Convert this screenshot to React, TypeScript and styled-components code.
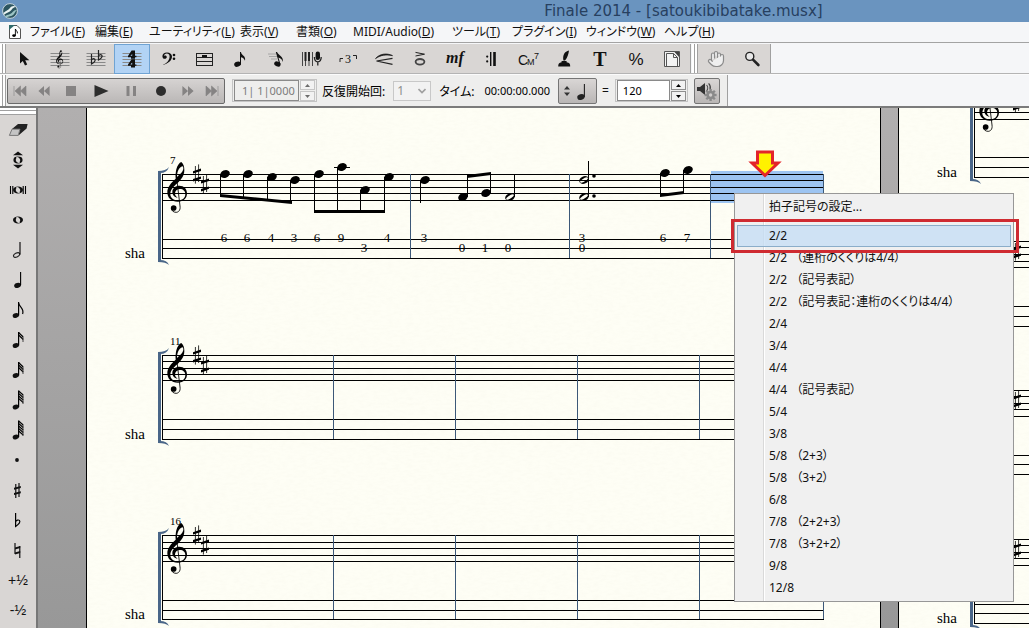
import React from "react";
import styled, { createGlobalStyle, css } from "styled-components";
import { Hand } from "lucide-react";

const UI_FONT = `"Noto Sans", "Noto Sans CJK JP", sans-serif`;
const SCORE_FONT = `"Liberation Serif", serif`;

const GlobalStyle = createGlobalStyle`
  *, *::before, *::after { box-sizing: border-box; }
  body { margin: 0; background: #f5f6f8; font-family: ${UI_FONT}; color: #111; }
  button, input, select { font: inherit; color: inherit; margin: 0; }
  button { padding: 0; border: 0; background: none; white-space: nowrap; }
  svg { display: block; flex: none; }
`;

/* ---------- window frame ---------- */

const Window = styled.div`
  display: flex;
  flex-direction: column;
  height: 100vh;
  overflow: hidden;
`;

const TitleBar = styled.header`
  display: flex;
  align-items: center;
  flex: none;
  height: 22px;
  padding-left: 2px;
  background: #6a94bf;
`;

const Title = styled.h1`
  flex: 1;
  margin: 0 0 0 320px;
  font-size: 15px;
  line-height: 20px;
  font-weight: 400;
  font-family: "DejaVu Sans", sans-serif;
  text-align: center;
  white-space: nowrap;
  color: #27405f;
`;

const MenuBar = styled.nav`
  display: grid;
  grid-template-columns: 22px 65px 54px 91px 56px 57px 99px 60px 74px 78px 60px;
  align-items: center;
  flex: none;
  height: 20px;
  padding-left: 8px;
  background: #f5f6f8;
  font-size: 12px;
  line-height: 18px;
`;

const MenuTitle = styled.button`
  text-align: left;
  font-feature-settings: "palt";
`;

/* ---------- tool rows ---------- */

const ToolRow = styled.div`
  display: flex;
  flex: none;
  height: 33px;
  padding: 1px 0 2px;
  border-top: 1px solid #a3a3a3;
  background: linear-gradient(#f5f6f8 0 30px, #b4b4b4 30px 31px, #fbfbfb 31px);
`;

const Grip = styled.span`
  flex: none;
  align-self: stretch;
  width: 6px;
  border-left: 2px solid #fff;
  border-right: 1px solid #a0a0a0;
  background: linear-gradient(90deg, #a0a0a0 0 1px, #fff 1px);
`;

const ToolStrip = styled.div`
  display: flex;
  flex: none;
  margin-right: 1px;
  border-right: 1px solid #a0a0a0;
  background: #d9d6d4;
`;

const ToolButton = styled.button<{ $active?: boolean }>`
  display: flex;
  align-items: center;
  justify-content: center;
  width: 36px;
  height: 30px;
  ${(p) =>
    p.$active &&
    css`
      background: #b2d3f5;
      border: 1px solid #6fa3d3;
    `}
`;

const PlaybackRow = styled.div`
  display: flex;
  flex: none;
  height: 33px;
  border-bottom: 2px solid #7b7b7b;
  background: #f5f6f8;
`;

const PlaybackBar = styled.div`
  display: flex;
  align-items: center;
  padding-right: 7px;
  border-right: 1px solid #a0a0a0;
  background: #eeeeed;
  font-size: 12px;
  white-space: nowrap;

  & > * { flex: none; }
`;

const Transport = styled.div`
  display: flex;
  height: 26px;
  margin: 0 7px 0 1px;
  border: 1px solid #6a6a6a;
  border-radius: 2px;
  background: linear-gradient(#d6d3d2, #bab7b6);
`;

const TransportButton = styled.button<{ $wide?: boolean }>`
  display: flex;
  align-items: center;
  justify-content: center;
  width: ${(p) => (p.$wide ? 30 : 24)}px;
`;

const NumberField = styled.span`
  display: flex;
  align-items: center;
  gap: 1px;
  height: 23px;
  padding: 1px;
  border: 1px solid #c4c4c4;
`;

const NumberInput = styled.input<{ $muted?: boolean; $width: number }>`
  width: ${(p) => p.$width}px;
  height: 21px;
  padding: 0 0 0 ${(p) => (p.$muted ? 7 : 5)}px;
  border: 1px solid #8a8a8a;
  border-radius: 0;
  background: ${(p) => (p.$muted ? "#eeeeed" : "#fff")};
  color: ${(p) => (p.$muted ? "#7c7c7c" : "#000")};
  font-size: 11px;
`;

const Stepper = styled.span`
  display: flex;
  flex-direction: column;
  gap: 1px;
`;

const StepButton = styled.button<{ $muted?: boolean }>`
  display: flex;
  align-items: center;
  justify-content: center;
  width: 15px;
  height: 10px;
  border: 1px solid ${(p) => (p.$muted ? "#c6c6c6" : "#8f8f8f")};
  background: #f2f2f2;
  color: ${(p) => (p.$muted ? "#6c6c6c" : "#000")};
`;

const FieldLabel = styled.label`
  display: flex;
  align-items: center;
  gap: 8px;
  margin-left: 5px;
  color: #000;
`;

const SelectBox = styled.span`
  display: grid;
  align-items: center;
  width: 38px;
  height: 20px;
  border: 1px solid #c8c8c8;
  background: #f2f2f2;

  & > * { grid-area: 1 / 1; }
  & > svg { justify-self: end; margin-right: 4px; pointer-events: none; }
`;

const PassSelect = styled.select`
  appearance: none;
  width: 100%;
  height: 18px;
  padding: 0 0 0 3px;
  border: 0;
  border-radius: 0;
  background: none;
  color: #8d8d8d;
  opacity: 1;
`;

const TimeLabel = styled.span`
  margin-left: 8px;
  font-feature-settings: "palt";
  color: #000;
`;

const TimeValue = styled.output`
  margin: 0 8px 0 10px;
  font-size: 11px;
  color: #000;
`;

const RaisedButton = styled.button<{ $width: number }>`
  display: flex;
  align-items: center;
  justify-content: center;
  gap: 2px;
  width: ${(p) => p.$width}px;
  height: 26px;
  border: 1px solid #757575;
  border-radius: 2px;
  background: linear-gradient(#d9d6d5, #b9b6b5);
`;

const TempoField = styled.label`
  display: flex;
  align-items: center;
  gap: 6px;
  margin: 0 6px 0 5px;
`;

/* ---------- palette and document area ---------- */

const Body = styled.main`
  display: flex;
  flex: 1;
  min-height: 0;
`;

const Palette = styled.aside`
  display: flex;
  flex-direction: column;
  flex: none;
  width: 36px;
  background: #d9d6d4;
`;

const PaletteGrip = styled.span`
  flex: none;
  height: 7px;
  border-top: 2px solid #fff;
  border-bottom: 1px solid #a0a0a0;
  background: linear-gradient(#a0a0a0 0 1px, #fff 1px);
`;

const PaletteButton = styled.button`
  display: flex;
  align-items: center;
  justify-content: center;
  flex: none;
  height: 30px;
  font-family: "Liberation Sans", sans-serif;
  font-size: 14px;
  line-height: 20px;
`;

const Workspace = styled.section`
  position: relative;
  display: flex;
  flex: 1;
  gap: 17px;
  min-width: 0;
  padding-left: 48px;
  border-left: 2px solid #777;
  overflow: hidden;
  background: linear-gradient(#b1afaf, #989898);
`;

const Sheet = styled.article<{ $last?: boolean }>`
  flex: ${(p) => (p.$last ? "1 0 0" : "none")};
  min-width: 0;
  overflow: hidden;
  border: solid #000;
  border-width: 0 ${(p) => (p.$last ? 0 : 1)}px 0 1px;
  background: #fefef5;
`;

const MeterMenu = styled.div`
  position: absolute;
  left: 696px;
  top: 85px;
  width: 280px;
  display: flex;
  flex-direction: column;
  padding: 2px;
  border: 1px solid #979797;
  background: linear-gradient(90deg, transparent 28px, #d9d9d9 28px 29px, #fff 29px 30px, transparent 30px) #f0f0f0;
`;

const MeterItem = styled.button<{ $active?: boolean }>`
  display: flex;
  align-items: center;
  gap: 9px;
  height: 22px;
  padding-left: 31px;
  border: 1px solid transparent;
  font-size: 12px;
  line-height: 20px;
  font-feature-settings: "palt";
  ${(p) =>
    p.$active &&
    css`
      border-color: #8badc9;
      background: rgba(196, 222, 245, 0.75);
    `}
`;

const Divider = styled.hr`
  width: 243px;
  height: 1px;
  margin: 3px 2px 3px auto;
  border: 0;
  background: #e0e0e0;
`;

const Highlight = styled.div`
  position: absolute;
  left: 693px;
  top: 111px;
  width: 288px;
  height: 34px;
  border: 3px solid #cf2b31;
  pointer-events: none;
`;

const Pointer = styled.svg`
  position: absolute;
  left: 709px;
  top: 41px;
`;

/* ---------- notation primitives ---------- */

const TrebleClef = ({ x, y, s }: { x: number; y: number; s: number }) => (
  <g transform={`translate(${x} ${y}) scale(${s})`}>
    <path
      fillRule="evenodd"
      d="M43 0C49 5 52 13 52 24C52 42 42 53 31 64C18 75 10 84 10 96C10 108 20 115 34 115C48 115 55 106 55 96C55 87 48 81 39 81C30 81 24 87 24 94C24 100 27 104 32 107C22 106 16 99 16 90C16 79 25 71 37 71C51 71 60 80 60 94C60 109 50 119 33 119C13 119 1 108 1 91C1 74 13 62 26 50C25 41 26 31 28 22C31 10 37 2 43 0ZM46 13C37 15 30 28 30 45C40 36 49 29 49 19C49 15 48 13 46 13Z"
    />
    <path d="M28 40L39 132C41 145 34 151 27 151C20 151 13 146 13 139" fill="none" stroke="#000" strokeWidth="2.6" />
    <circle cx="20" cy="138" r="8.5" />
  </g>
);

const Sharp = ({ x, y }: { x: number; y: number }) => (
  <g transform={`translate(${x} ${y})`}>
    <path d="M-1.6 -8V9.6M1.6 -9.6V8" stroke="#000" strokeWidth="0.8" />
    <path d="M-4 -2.8L4 -5.4V-3L-4 -0.6ZM-4 5L4 2.4V4.8L-4 7.4Z" />
  </g>
);

const Head = ({ x, y, open }: { x: number; y: number; open?: boolean }) => (
  <g transform={`translate(${x} ${y}) rotate(-24)`}>
    {open ? (
      <path fillRule="evenodd" d="M-5 0A5 3.6 0 1 1 5 0A5 3.6 0 1 1 -5 0ZM-4.2 0.9A4.3 1.5 -8 1 0 4.2 -0.9A4.3 1.5 -8 1 0 -4.2 0.9Z" />
    ) : (
      <ellipse rx="5" ry="3.7" />
    )}
  </g>
);

const Stem = ({ x, from, to }: { x: number; from: number; to: number }) => (
  <rect x={x} y={Math.min(from, to)} width="1" height={Math.abs(to - from)} />
);

const Beam = ({ x1, y1, x2, y2 }: { x1: number; y1: number; x2: number; y2: number }) => (
  <path d={`M${x1} ${y1}L${x2} ${y2}v3L${x1} ${y1 + 3}Z`} />
);

type SystemProps = {
  left: number;
  right: number;
  staff: number[];
  tab: number[];
  bars: number[];
  label?: string;
  number?: string;
};

const System = ({ left, right, staff, tab, bars, label, number }: SystemProps) => {
  const top = staff[0];
  const bottom = tab[2];
  return (
    <g>
      {[...staff, ...tab].map((y) => (
        <rect key={y} x={left} y={y} width={right - left} height="1" />
      ))}
      {bars.map((x) => (
        <rect key={x} x={x} y={top} width="1" height={bottom - top} fill="#3c5878" />
      ))}
      <rect x={left} y={top} width="1" height={bottom - top + 1} />
      <rect x={left - 4} y={top - 3} width="3" height={bottom - top + 7} fill="#4a6688" />
      <path
        d={`M${left - 4} ${top - 3}q8 0 11 -4q-2 6 -9 6zM${left - 4} ${bottom + 4}q8 0 11 3q-2 -5 -9 -5z`}
        fill="#4a6688"
      />
      <TrebleClef x={left + 5} y={top - 12} s={1 / 3} />
      <Sharp x={left + 35} y={top} />
      <Sharp x={left + 43} y={top + 10} />
      {number && (
        <text x={left + 8} y={top - 10} fontSize="11">
          {number}
        </text>
      )}
      {label && (
        <text x={left - 37} y={bottom} fontSize="15">
          {label}
        </text>
      )}
    </g>
  );
};

const PaperGrain = ({ id }: { id: string }) => (
  <>
    <filter id={id} x="0" y="0" width="100%" height="100%">
      <feTurbulence type="fractalNoise" baseFrequency="0.15 0.4" numOctaves="2" seed="4" />
      <feColorMatrix values="0 0 0 0 0.6  0 0 0 0 0.57  0 0 0 0 0.45  0.4 0 0 0 -0.15" />
    </filter>
    <rect width="100%" height="100%" filter={`url(#${id})`} opacity="0.25" />
  </>
);

/* Coordinates inside a sheet are measured from the top left of its paper. */

const beamedNotes: [number, number, number, number][] = [
  // head x, head y, stem x, stem end
  [138, 66, 133, 88],
  [161, 66, 156, 90],
  [185, 69, 180, 93],
  [208, 72, 203, 95],
  [232, 66, 227, 104],
  [255, 59, 250, 104],
  [278, 82, 273, 104],
  [302, 69, 297, 104],
  [338, 72, 333, 95],
  [376, 89, 380, 68],
  [399, 85, 403, 65],
  [578, 65, 573, 88],
  [601, 62, 596, 85],
];

const tabNumbers: [number, number, string][] = [
  [137, 0, "6"], [160, 0, "6"], [184, 0, "4"], [207, 0, "3"],
  [230, 0, "6"], [254, 0, "9"], [277, 1, "3"], [300, 0, "4"],
  [337, 0, "3"], [375, 1, "0"], [398, 1, "1"], [421, 1, "0"],
  [495, 0, "3"], [495, 1, "0"], [576, 0, "6"], [600, 0, "7"],
];

const FirstSheet = () => (
  <svg width="793" height="520" fontFamily={SCORE_FONT} role="img" aria-label="satoukibibatake">
    <PaperGrain id="grain-a" />
    <rect x="624" y="63" width="112" height="32" fill="#9dc4f1" />
    <System left={75} right={737} staff={[66, 72, 79, 85, 92]} tab={[131, 140, 150]} bars={[323, 482, 623, 736]} label="sha" number="7" />
    <System left={75} right={737} staff={[247, 253, 260, 266, 272]} tab={[311, 321, 331]} bars={[246, 368, 490, 612, 736]} label="sha" number="11" />
    <System left={75} right={737} staff={[427, 434, 440, 447, 453]} tab={[492, 502, 511]} bars={[246, 368, 490, 612, 736]} label="sha" number="16" />
    {beamedNotes.map(([x, y, sx, end]) => (
      <g key={x}>
        <Head x={x} y={y} />
        <Stem x={sx} from={y} to={end} />
      </g>
    ))}
    <rect x="247" y="59" width="16" height="1" />
    <Beam x1={133} y1={86} x2={205} y2={93} />
    <Beam x1={227} y1={102} x2={298} y2={102} />
    <Beam x1={380} y1={67} x2={404} y2={64} />
    <Beam x1={573} y1={86} x2={597} y2={83} />
    <Head x={423} y={89} open />
    <Stem x={427} from={89} to={66} />
    <Head x={497} y={72} open />
    <Head x={497} y={89} open />
    <Stem x={501} from={53} to={89} />
    <circle cx="507" cy="68" r="1.8" />
    <circle cx="507" cy="88" r="1.8" />
    {tabNumbers.map(([x, row, n]) => (
      <text key={`${x}-${row}`} x={x} y={row ? 144 : 134} fontSize="13" textAnchor="middle">
        {n}
      </text>
    ))}
  </svg>
);

const SecondSheet = () => (
  <svg width="100%" height="520" fontFamily={SCORE_FONT} role="img" aria-label="satoukibibatake 2">
    <PaperGrain id="grain-b" />
    <System left={75} right={737} staff={[-15, -9, -2, 4, 11]} tab={[49, 59, 69]} bars={[]} label="sha" />
    <System left={75} right={737} staff={[133, 139, 146, 153, 159]} tab={[198, 208, 218]} bars={[]} />
    <System left={75} right={737} staff={[282, 288, 295, 301, 308]} tab={[347, 356, 366]} bars={[]} />
    <System left={75} right={737} staff={[431, 437, 444, 450, 457]} tab={[496, 505, 515]} bars={[]} label="sha" />
  </svg>
);

/* ---------- icons ---------- */

const Icon = ({ children, size = 24 }: { children: React.ReactNode; size?: number }) => (
  <svg width={size} height={size} viewBox={`0 0 ${size} ${size}`} fill="#111" aria-hidden="true">
    {children}
  </svg>
);

const StaffLines = () => <path d="M2.5 6.5H21.5M2.5 9.5H21.5M2.5 12.5H21.5M2.5 15.5H21.5M2.5 18.5H21.5" stroke="#888" strokeWidth="1" />;

const WholeNote = ({ y = 12, r = 5 }: { y?: number; r?: number }) => (
  <g transform={`translate(12 ${y})`}>
    <path
      fillRule="evenodd"
      d={`M${-r} 0A${r} 3.4 0 1 1 ${r} 0A${r} 3.4 0 1 1 ${-r} 0ZM-1.8 -1.2A2.6 1.6 50 1 0 1.8 1.2A2.6 1.6 50 1 0 -1.8 -1.2Z`}
    />
  </g>
);

const FlaggedNote = ({ flags }: { flags: number }) => {
  const headY = flags > 3 ? 19 : 17.5;
  return (
    <Icon>
      <ellipse cx="9.8" cy={headY} rx="3.2" ry="2.3" transform={`rotate(-18 9.8 ${headY})`} />
      <path d={`M12.6 ${flags > 3 ? 2.5 : 4}V${headY}`} stroke="#000" strokeWidth="1.2" />
      {flags === 1 ? (
        <path d="M12.6 5C13 9 18.6 10 16.6 16" fill="none" stroke="#000" strokeWidth="1.2" />
      ) : (
        <>
          {Array.from({ length: flags }, (_, i) => (
            <path
              key={i}
              d={`M12.6 ${(flags > 3 ? 3 : 4.5) + i * 2.5}L17.2 ${(flags > 3 ? 7 : 9) + i * 2.5}`}
              stroke="#000"
              strokeWidth="1.1"
            />
          ))}
          <path d={`M17 ${flags > 3 ? 7 : 9}V${(flags > 3 ? 10 : 12) + (flags - 1) * 2}`} stroke="#333" strokeWidth="0.9" />
        </>
      )}
    </Icon>
  );
};

const tools: { name: string; icon: React.ReactNode; active?: boolean }[] = [
  { name: "選択", icon: <Icon><path d="M8 5V16.4L10.8 14L13 18.6L15.2 17.6L13.2 13.2H17.4Z" /></Icon> },
  { name: "五線", icon: <Icon><StaffLines /><TrebleClef x={8} y={3} s={0.12} /></Icon> },
  {
    name: "調号",
    icon: (
      <Icon>
        <StaffLines />
        <path d="M7.5 7V17C10 15.5 12 13.5 10.8 12.2C9.8 11.4 8.3 12 7.5 13M14.5 3V13C17 11.5 19 9.5 17.8 8.2C16.8 7.4 15.3 8 14.5 9" fill="none" stroke="#222" strokeWidth="1.2" />
      </Icon>
    ),
  },
  {
    name: "拍子記号",
    active: true,
    icon: (
      <Icon>
        <StaffLines />
        <path d="M11.6 3.6H15V8.8H16.4V10.2H15V11.8H11V10.2H8V9ZM12.2 7L10.4 8.8H12.2ZM11.6 12.2H15V17.4H16.4V18.8H15V20.4H11V18.8H8V17.6ZM12.2 15.6L10.4 17.4H12.2Z" fillRule="evenodd" />
      </Icon>
    ),
  },
  {
    name: "音部記号",
    icon: (
      <Icon>
        <path d="M6.5 18C11 16 13.6 13 13.6 9.4C13.6 7.2 12.4 6.4 10.8 6.4C9.2 6.4 8 7.4 8 9C9 8 10.8 8.6 10.8 10C10.8 11.2 9.8 11.8 8.8 11.8C7.4 11.8 6.4 10.8 6.4 9.2C6.4 7 8.2 5.4 11 5.4C14 5.4 16 7 16 9.6C16 13.6 12 17 6.5 18Z" />
        <circle cx="18" cy="8" r="1.3" />
        <circle cx="18" cy="11.8" r="1.3" />
      </Icon>
    ),
  },
  {
    name: "小節",
    icon: (
      <Icon>
        <path d="M4.5 6.5H20.5M4.5 10.5H20.5M4.5 14.5H20.5M4.5 18.5H20.5M4.5 6V19M20.5 6V19" stroke="#222" fill="none" />
        <rect x="10" y="8" width="5" height="2.4" />
      </Icon>
    ),
  },
  {
    name: "ステップ入力",
    icon: (
      <Icon>
        <ellipse cx="9.6" cy="17.2" rx="3.5" ry="2.5" transform="rotate(-18 9.6 17.2)" />
        <path d="M12 5H13C13.2 8.4 18.2 8.6 17 13.8C16.2 11 14 10.4 13 10.2V17.4H12Z" />
      </Icon>
    ),
  },
  {
    name: "高速ステップ入力",
    icon: (
      <Icon>
        <path d="M4 7H12M5 9.5H13M7 12H13" stroke="#999" strokeWidth="0.8" />
        <ellipse cx="13.4" cy="17" rx="3.3" ry="2.4" transform="rotate(20 13.4 17)" />
        <path d="M11.8 5H13C14 8 19.6 9 19 15C18 11.6 15.6 10.8 14.4 10.4L16.4 17L15.4 17.4Z" />
      </Icon>
    ),
  },
  {
    name: "HyperScribe",
    icon: (
      <Icon>
        <path d="M2.5 5V19M5.5 5V19M9 5V19M12.5 5V19" stroke="#444" />
        <path d="M4.5 5H6.5V14H4.5ZM8 5H10V14H8Z" fill="#222" />
        <rect x="15.6" y="4.6" width="4.4" height="8.4" rx="2.2" />
        <path d="M14.4 10C14.4 16.4 21.2 16.4 21.2 10M17.8 14.6V18.4" fill="none" stroke="#222" strokeWidth="1.3" />
      </Icon>
    ),
  },
  {
    name: "連符",
    icon: (
      <Icon>
        <path d="M4 15V11.5H7M17 8.5H20.5V12" stroke="#222" fill="none" />
        <text x="12" y="16" fontSize="12" fontFamily={SCORE_FONT} textAnchor="middle">3</text>
      </Icon>
    ),
  },
  {
    name: "変形図形",
    icon: (
      <Icon>
        <path d="M3.5 11.6C8 6.4 15 6 20.5 8.6C14 7.2 8.6 8 3.5 11.6Z" stroke="#222" strokeWidth="0.8" />
        <path d="M20.5 11.4L4.5 14L20.5 17.4" fill="none" stroke="#222" strokeWidth="1.1" />
      </Icon>
    ),
  },
  {
    name: "アーティキュレーション",
    icon: (
      <Icon>
        <path d="M7.5 5.4L16.5 7.2L7.5 9" fill="none" stroke="#222" strokeWidth="1" />
        <ellipse cx="12" cy="14.8" rx="4.4" ry="2.8" fill="none" stroke="#444" strokeWidth="1.8" />
      </Icon>
    ),
  },
  {
    name: "発想記号",
    icon: <Icon><text x="11" y="16" fontSize="16" fontWeight="700" fontStyle="italic" fontFamily={SCORE_FONT} textAnchor="middle">mf</text></Icon>,
  },
  {
    name: "反復記号",
    icon: <Icon><circle cx="7.2" cy="9.6" r="1.1" /><circle cx="7.2" cy="14.4" r="1.1" /><path d="M10 5H11.4V19H10ZM13.2 5H15.8V19H13.2Z" /></Icon>,
  },
  {
    name: "コードネーム",
    icon: (
      <Icon>
        <text x="2" y="18" fontSize="14" fontFamily={`"Liberation Sans", sans-serif`}>C</text>
        <text x="11" y="18" fontSize="9" fontFamily={`"Liberation Sans", sans-serif`}>M</text>
        <text x="18" y="12" fontSize="9" fontFamily={`"Liberation Sans", sans-serif`}>7</text>
      </Icon>
    ),
  },
  {
    name: "歌詞",
    icon: <Icon><path d="M17 3.5C12.6 4.4 10.4 8 11.4 13.4L13 13.4C15.6 10.6 16.4 7.4 17 3.5ZM9.6 14H14.6V15.2C17.6 15.6 18.2 17 18.2 19.4H6.2C6.2 17 7 15.6 9.6 15.2Z" /></Icon>,
  },
  {
    name: "文字",
    icon: <Icon><text x="12" y="19" fontSize="20" fontWeight="700" fontFamily={SCORE_FONT} textAnchor="middle">T</text></Icon>,
  },
  {
    name: "サイズ",
    icon: <Icon><text x="12" y="18" fontSize="17" fontFamily={`"Liberation Sans", sans-serif`} textAnchor="middle">%</text></Icon>,
  },
  {
    name: "ページレイアウト",
    icon: (
      <Icon>
        <path d="M4.5 4.5H19.5V19.5H4.5Z" fill="#f3f3f3" stroke="#555" />
        <path d="M6.5 6.5H13.5L17.5 10.5V19M13.5 6.5V10.5H17.5M6.5 6.5V19" fill="none" stroke="#555" />
        <path d="M14.5 5H19V10Z" fill="#444" />
      </Icon>
    ),
  },
];

const paletteItems: { name: string; icon: React.ReactNode }[] = [
  {
    name: "消しゴム",
    icon: (
      <Icon>
        <path d="M6 11L12 6H21.6L14 11ZM14 11L21.6 6L20.6 10.4L12.4 17.4Z" fill="#222" />
        <path d="M6 11.2H14L12.2 17.4H3.4Z" fill="#c4c4c4" stroke="#777" />
      </Icon>
    ),
  },
  { name: "リピート", icon: <Icon><path d="M7 7.2L12 3.4L17 7.2ZM7 16.8L12 20.6L17 16.8Z" /><WholeNote r={4.6} /></Icon> },
  { name: "倍全音符", icon: <Icon><path d="M4.5 8V16M6.8 8V16M17.2 8V16M19.5 8V16" stroke="#000" strokeWidth="1.1" /><WholeNote /></Icon> },
  { name: "全音符", icon: <Icon><WholeNote /></Icon> },
  { name: "2分音符", icon: <Icon><ellipse cx="10.6" cy="17" rx="3.3" ry="1.9" transform="rotate(-28 10.6 17)" fill="none" stroke="#222" strokeWidth="1.1" /><path d="M14 4V16.4" stroke="#000" strokeWidth="1.1" /></Icon> },
  { name: "4分音符", icon: <Icon><ellipse cx="11.6" cy="17.4" rx="3.5" ry="2.5" transform="rotate(-18 11.6 17.4)" /><path d="M14.6 4V17" stroke="#000" strokeWidth="1.1" /></Icon> },
  { name: "8分音符", icon: <FlaggedNote flags={1} /> },
  { name: "16分音符", icon: <FlaggedNote flags={2} /> },
  { name: "32分音符", icon: <FlaggedNote flags={3} /> },
  { name: "64分音符", icon: <FlaggedNote flags={4} /> },
  { name: "128分音符", icon: <FlaggedNote flags={5} /> },
  { name: "付点", icon: <Icon><circle cx="11" cy="12" r="1.9" /></Icon> },
  { name: "シャープ", icon: <Icon><path d="M9.8 6V20M13 5V19" stroke="#000" strokeWidth="1.1" /><path d="M8 9.8L14.8 8V10L8 11.8ZM8 15L14.8 13.2V15.2L8 17Z" /></Icon> },
  { name: "フラット", icon: <Icon><path d="M9.6 5V18.4C13 16 14.8 14 13.4 12.4C12.2 11.4 10.4 12.4 9.6 13.6" fill="none" stroke="#000" strokeWidth="1.2" /></Icon> },
  { name: "ナチュラル", icon: <Icon><path d="M9 5V16M13.8 8V20" stroke="#000" strokeWidth="1.1" /><path d="M9 9.4L14.2 8V10L9 11.4ZM9 14.4L14.2 13V15L9 16.4Z" /></Icon> },
  { name: "半音上げ", icon: "+½" },
  { name: "半音下げ", icon: "-½" },
];

const dim = "#858383";
const transport: { name: string; wide?: boolean; icon: React.ReactNode }[] = [
  { name: "最初へ", icon: <Icon size={16}><path d="M2 3V13M8.5 3L3 8L8.5 13ZM14 3L8.5 8L14 13Z" fill={dim} stroke={dim} strokeWidth="0.6" /></Icon> },
  { name: "巻戻し", icon: <Icon size={16}><path d="M8 3L2.4 8L8 13ZM13.6 3L8 8L13.6 13Z" fill={dim} /></Icon> },
  { name: "停止", wide: true, icon: <Icon size={16}><rect x="3" y="3" width="10" height="10" fill={dim} /></Icon> },
  { name: "再生", wide: true, icon: <Icon size={16}><path d="M1.5 2L15.5 8L1.5 14Z" fill="#2d2d2d" /></Icon> },
  { name: "一時停止", wide: true, icon: <Icon size={16}><path d="M3.5 3H6.5V13H3.5ZM10 3H13V13H10Z" fill={dim} /></Icon> },
  { name: "録音", wide: true, icon: <Icon size={16}><circle cx="8" cy="8" r="5" fill="#2d2d2d" /></Icon> },
  { name: "早送り", icon: <Icon size={16}><path d="M2.4 3L8 8L2.4 13ZM8 3L13.6 8L8 13Z" fill={dim} /></Icon> },
  { name: "最後へ", icon: <Icon size={16}><path d="M14 3V13M2 3L7.5 8L2 13ZM7.5 3L13 8L7.5 13Z" fill={dim} stroke={dim} strokeWidth="0.6" /></Icon> },
];

const Arrow = ({ down }: { down?: boolean }) => (
  <svg width="5" height="3" viewBox="0 0 5 3" fill="currentColor" aria-hidden="true">
    <path d={down ? "M0 0H5L2.5 3Z" : "M0 3H5L2.5 0Z"} />
  </svg>
);

const Spinner = ({ muted, name }: { muted?: boolean; name: string }) => (
  <Stepper>
    <StepButton $muted={muted} aria-label={`${name} +`}><Arrow /></StepButton>
    <StepButton $muted={muted} aria-label={`${name} -`}><Arrow down /></StepButton>
  </Stepper>
);

const gearTeeth = Array.from({ length: 8 }, (_, i) => i * 45);

/* ---------- data ---------- */

const menus: [string, string][] = [
  ["ファイル", "F"], ["編集", "E"], ["ユーティリティ", "L"], ["表示", "V"], ["書類", "O"],
  ["MIDI/Audio", "D"], ["ツール", "T"], ["プラグイン", "I"], ["ウィンドウ", "W"], ["ヘルプ", "H"],
];

const meters: [string, string?][] = [
  ["2/2"],
  ["2/2", "（連桁のくくりは4/4）"],
  ["2/2", "（記号表記）"],
  ["2/2", "（記号表記：連桁のくくりは4/4）"],
  ["2/4"],
  ["3/4"],
  ["4/4"],
  ["4/4", "（記号表記）"],
  ["5/4"],
  ["3/8"],
  ["5/8", "（2+3）"],
  ["5/8", "（3+2）"],
  ["6/8"],
  ["7/8", "（2+2+3）"],
  ["7/8", "（3+2+2）"],
  ["9/8"],
  ["12/8"],
];

export default function App() {
  return (
    <Window>
      <GlobalStyle />
      <TitleBar>
        <svg width="16" height="16" viewBox="0 0 16 16" aria-hidden="true">
          <circle cx="8" cy="8" r="7.4" fill="#2c5560" stroke="#dfe9ee" strokeWidth="0.8" />
          <path d="M1.4 10C4 7.6 6 7.6 8 5C9.6 3 12 2.4 14 4C11.6 4 10.6 5.4 9.4 7C7.4 9.6 4.6 9.4 1.8 12Z" fill="#e9f3f3" />
          <path d="M3 13C6 11 8.4 12 10.6 9C12 7.2 13.4 6.6 15 7C13.4 8.4 13 9.6 11.6 11.4C9.6 13.6 6.4 13 4.4 14.4Z" fill="#9cc5c5" />
        </svg>
        <Title>Finale 2014 - [satoukibibatake.musx]</Title>
      </TitleBar>

      <MenuBar>
        <svg width="14" height="16" viewBox="0 0 14 16" aria-hidden="true">
          <path d="M1.5 1.5H9L12.5 5V14.5H1.5Z" fill="#fff" stroke="#555" />
          <path d="M1 1H7L1 6Z" fill="#2f6a6a" />
          <ellipse cx="6" cy="11.6" rx="1.8" ry="1.3" />
          <path d="M7.4 11.6V5C7.8 6.8 9.8 7 9.4 9.4" fill="none" stroke="#000" strokeWidth="0.9" />
        </svg>
        {menus.map(([name, key]) => (
          <MenuTitle key={name}>
            {name}(<u>{key}</u>)
          </MenuTitle>
        ))}
      </MenuBar>

      <ToolRow>
        <Grip />
        <ToolStrip>
          {tools.map((t) => (
            <ToolButton key={t.name} aria-label={t.name} $active={t.active}>
              {t.icon}
            </ToolButton>
          ))}
        </ToolStrip>
        <Grip />
        <ToolStrip>
          <ToolButton aria-label="手のひら">
            <Hand size={18} color="#8a8a8a" strokeWidth={1.6} fill="#efefef" />
          </ToolButton>
          <ToolButton aria-label="ズーム">
            <Icon>
              <circle cx="9.8" cy="9.4" r="4" fill="#e8e8e8" stroke="#222" strokeWidth="1.4" />
              <path d="M13 12.6L18.4 18" stroke="#222" strokeWidth="2.6" strokeLinecap="round" />
            </Icon>
          </ToolButton>
        </ToolStrip>
      </ToolRow>

      <PlaybackRow>
        <PlaybackBar>
          <Grip />
          <Transport>
            {transport.map((b) => (
              <TransportButton key={b.name} aria-label={b.name} $wide={b.wide}>
                {b.icon}
              </TransportButton>
            ))}
          </Transport>
          <NumberField>
            <NumberInput $muted $width={65} aria-label="小節位置" defaultValue="1| 1|0000" />
            <Spinner muted name="小節位置" />
          </NumberField>
          <FieldLabel>
            反復開始回:
            <SelectBox>
              <PassSelect disabled defaultValue="1">
                <option>1</option>
              </PassSelect>
              <svg width="8" height="6" viewBox="0 0 8 6" aria-hidden="true">
                <path d="M0.5 1L4 4.6L7.5 1" fill="none" stroke="#a0a0a0" strokeWidth="1.6" />
              </svg>
            </SelectBox>
          </FieldLabel>
          <TimeLabel>タイム:</TimeLabel>
          <TimeValue>00:00:00.000</TimeValue>
          <RaisedButton $width={39} aria-label="テンポの単位">
            <svg width="8" height="14" viewBox="0 0 8 14" fill="#333" aria-hidden="true">
              <path d="M1 5.5L4 2L7 5.5ZM1 8.5L4 12L7 8.5Z" />
            </svg>
            <svg width="18" height="20" viewBox="0 0 18 20" fill="#222" aria-hidden="true">
              <ellipse cx="8" cy="16" rx="3.8" ry="2.8" transform="rotate(-18 8 16)" />
              <path d="M11.4 3V16" stroke="#222" strokeWidth="1.1" />
            </svg>
          </RaisedButton>
          <TempoField>
            =
            <NumberField>
              <NumberInput $width={53} defaultValue="120" />
              <Spinner name="テンポ" />
            </NumberField>
          </TempoField>
          <RaisedButton $width={26} aria-label="再生設定">
            <svg width="22" height="22" viewBox="0 0 22 22" aria-hidden="true">
              <path d="M1 7H4L9 3V15L4 11H1Z" fill="#333" />
              <path d="M10.6 5C12 6.6 12 9.4 10.6 11M12.6 3.4C14.6 5.6 14.6 8 14 9.4" fill="none" stroke="#444" strokeWidth="1.1" />
              <g transform="translate(14.6 15)" fill="#8a8a8a">
                {gearTeeth.map((a) => (
                  <rect key={a} x="-1.2" y="-6" width="2.4" height="4" transform={`rotate(${a})`} />
                ))}
                <circle r="4.2" />
                <circle r="1.7" fill="#d0cdcc" />
              </g>
            </svg>
          </RaisedButton>
        </PlaybackBar>
      </PlaybackRow>

      <Body>
        <Palette>
          <PaletteGrip />
          {paletteItems.map((p) => (
            <PaletteButton key={p.name} aria-label={p.name}>
              {p.icon}
            </PaletteButton>
          ))}
        </Palette>
        <Workspace>
          <Sheet>
            <FirstSheet />
          </Sheet>
          <Sheet $last>
            <SecondSheet />
          </Sheet>
          <Pointer width="36" height="30" viewBox="0 0 36 30" aria-hidden="true">
            <path d="M10.5 3H25.5V14H31L18 26.5L5 14H10.5Z" fill="#fff200" stroke="#e3242b" strokeWidth="3" />
          </Pointer>
          <MeterMenu role="menu">
            <MeterItem role="menuitem">拍子記号の設定...</MeterItem>
            <Divider />
            {meters.map(([value, detail], i) => (
              <MeterItem key={value + (detail ?? "")} role="menuitem" $active={i === 0}>
                <span>{value}</span>
                {detail && <span>{detail}</span>}
              </MeterItem>
            ))}
          </MeterMenu>
          <Highlight />
        </Workspace>
      </Body>
    </Window>
  );
}
